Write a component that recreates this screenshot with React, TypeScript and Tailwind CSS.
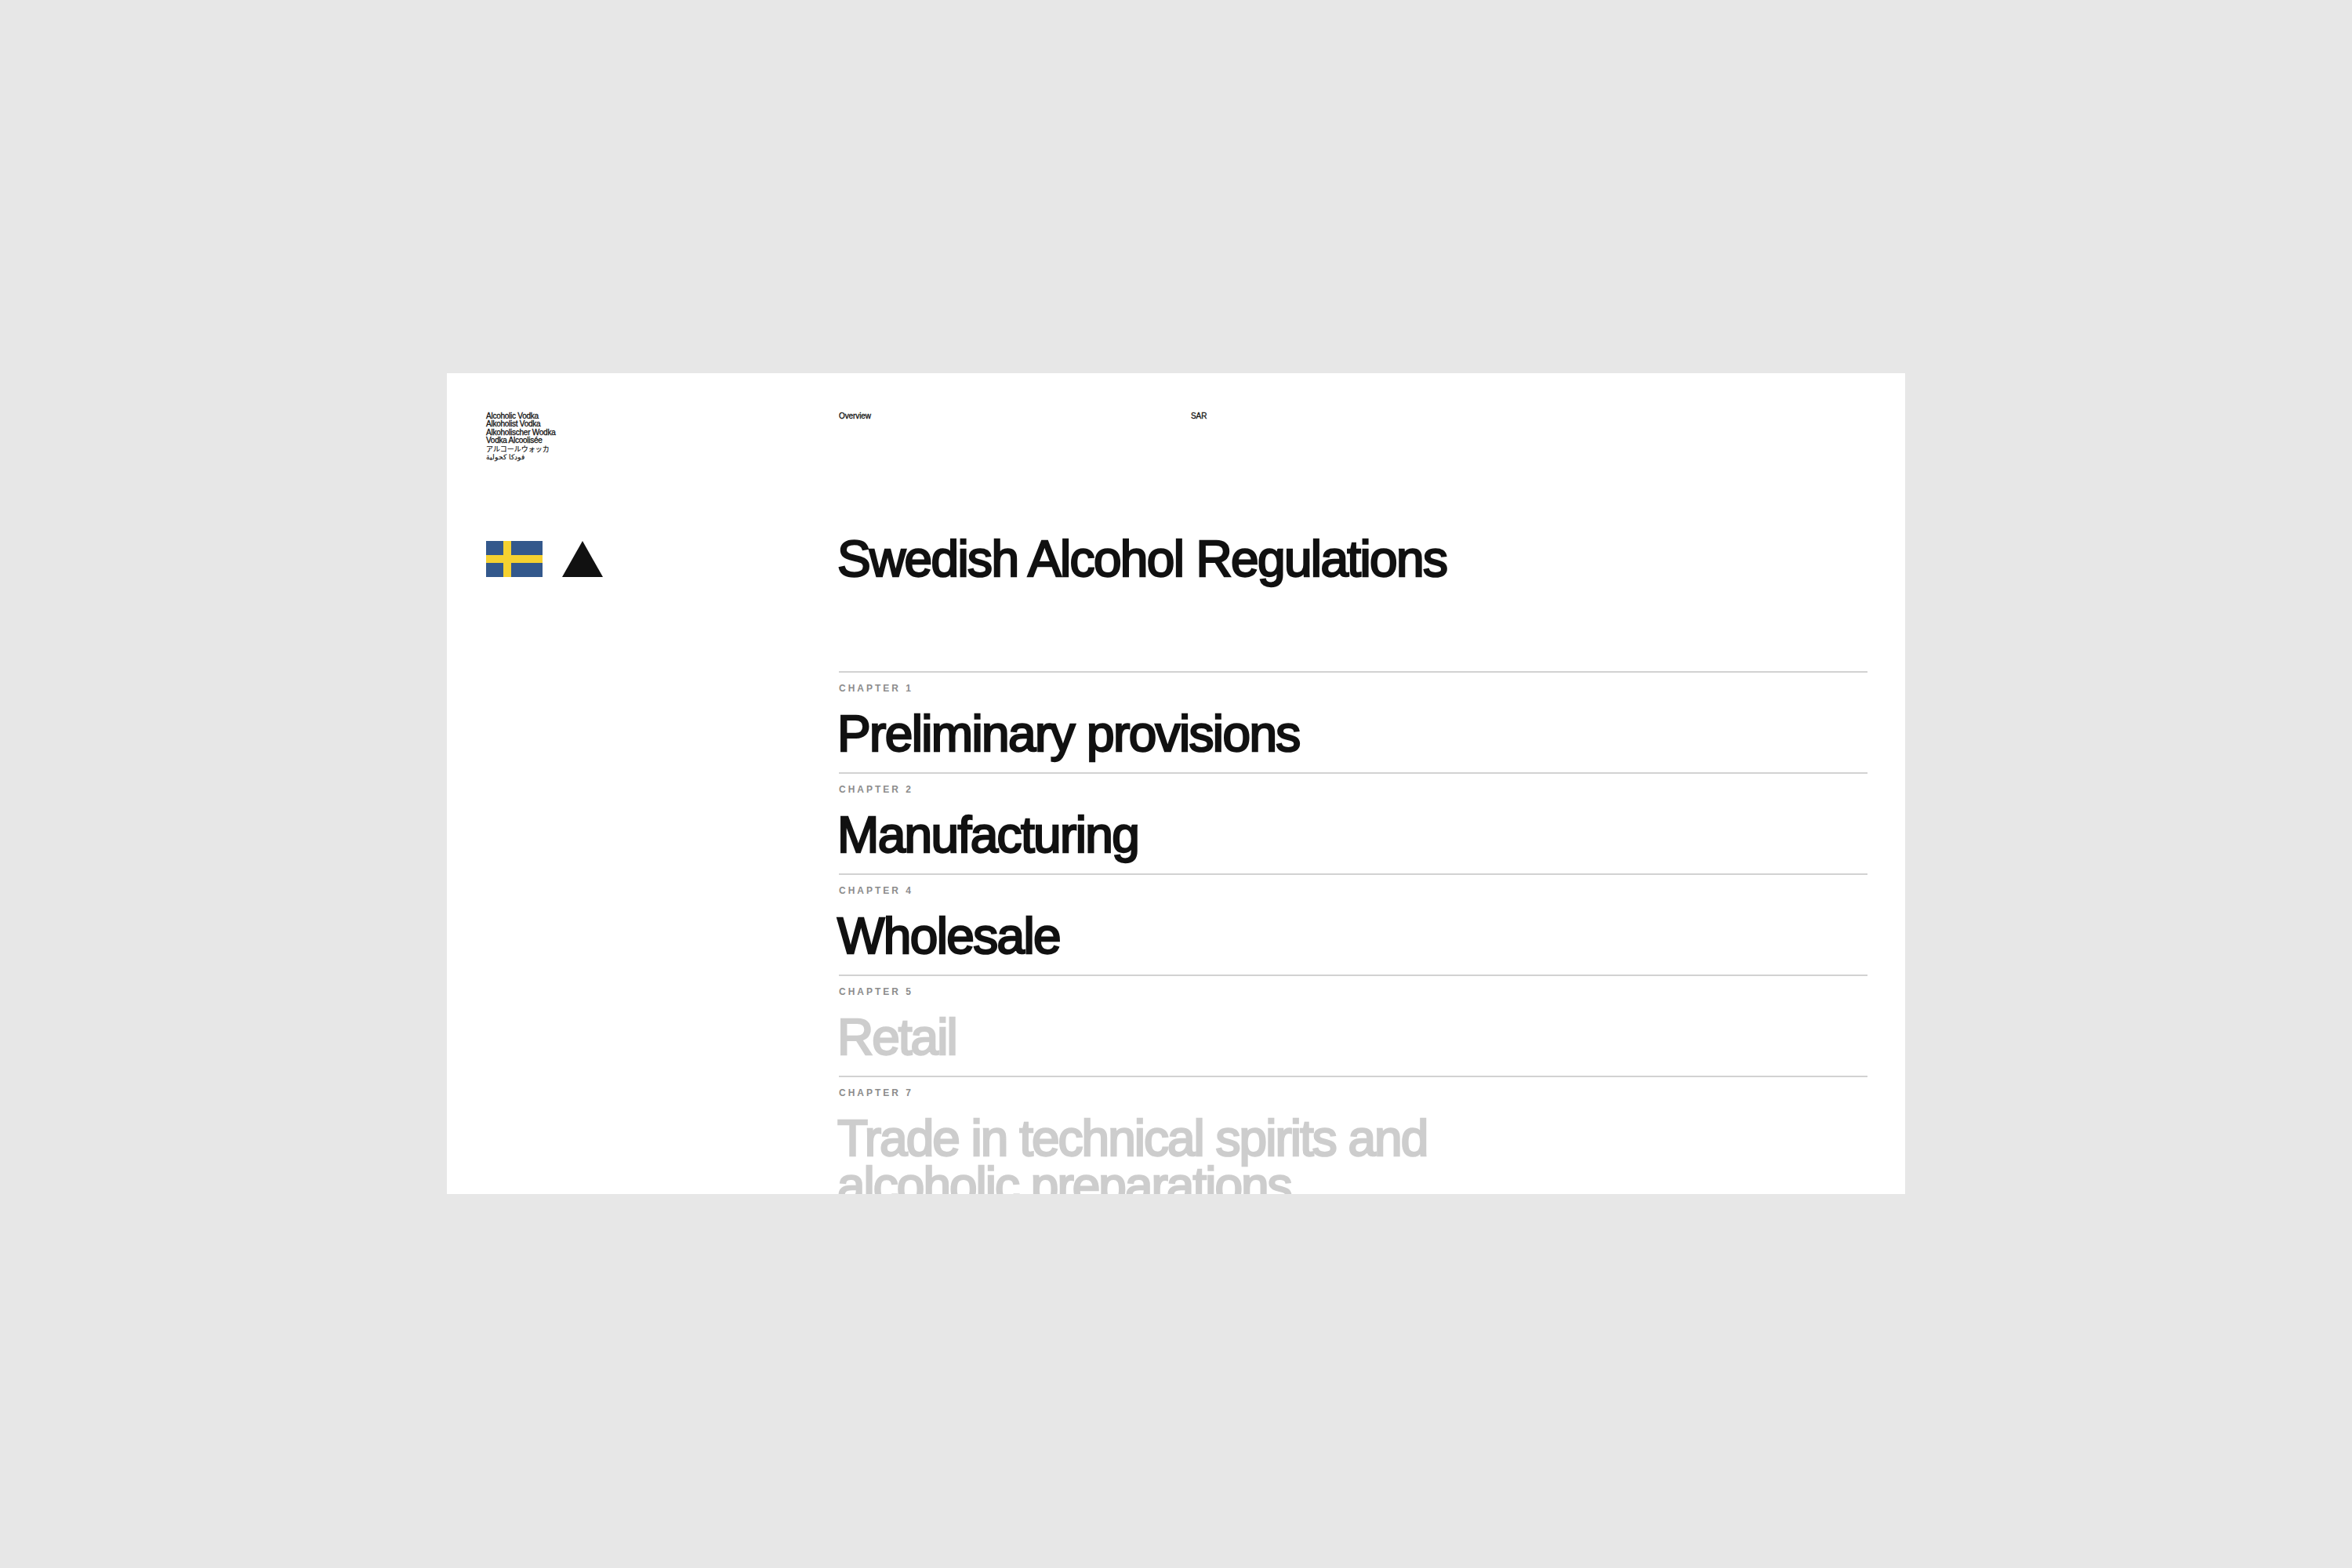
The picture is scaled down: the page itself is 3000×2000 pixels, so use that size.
const chapters = [
  { label: "CHAPTER 1", title: "Preliminary provisions", active: true },
  { label: "CHAPTER 2", title: "Manufacturing", active: true },
  { label: "CHAPTER 4", title: "Wholesale", active: true },
  { label: "CHAPTER 5", title: "Retail", active: false },
  { label: "CHAPTER 7", title: "Trade in technical spirits and alcoholic preparations", active: false },
];

const SwedishFlag = () => (
  <svg width="72" height="46" viewBox="0 0 72 46">
    <rect width="72" height="46" fill="#33588c" />
    <rect x="22" width="10" height="46" fill="#f5d130" />
    <rect y="18" width="72" height="10" fill="#f5d130" />
  </svg>
);

export default function App() {
  return (
    <div className="w-[3000px] h-[2000px] bg-[#e7e7e7] flex justify-center pt-[476px] font-['Liberation_Sans','Noto_Sans_CJK_JP',sans-serif]">
      <div className="w-[1860px] h-[1047px] bg-white overflow-hidden flex pl-[50px] pr-[48px] pt-[50px]">
        <div className="w-[450px] shrink-0 flex flex-col">
          <div className="text-[10px] leading-[10.4px] tracking-[-0.25px] text-[#111] [-webkit-text-stroke:0.3px_#111]">
            <div>Alcoholic Vodka</div>
            <div>Alkoholist Vodka</div>
            <div>Alkoholischer Wodka</div>
            <div>Vodka Alcoolisée</div>
            <div className="text-[9px] tracking-normal [-webkit-text-stroke:0.15px_#111]">アルコールウォッカ</div>
            <div className="text-[9px] tracking-normal [-webkit-text-stroke:0.15px_#111]" dir="rtl" style={{ textAlign: "left" }}>فودكا كحولية</div>
          </div>
          <div className="flex items-start gap-[25px] mt-[102px]">
            <SwedishFlag />
            <svg width="52" height="46" viewBox="0 0 52 46">
              <polygon points="26,0 52,46 0,46" fill="#111" />
            </svg>
          </div>
        </div>
        <div className="flex-1 flex flex-col">
          <div className="flex text-[10px] leading-[10px] tracking-[-0.1px] text-[#111] [-webkit-text-stroke:0.3px_#111]">
            <div className="w-[449px]">Overview</div>
            <div>SAR</div>
          </div>
          <h1 className="text-[64px] leading-[72px] tracking-[-1.65px] text-[#111] [-webkit-text-stroke:2.4px_#111] mt-[141px] -ml-[2px]">
            Swedish Alcohol Regulations
          </h1>
          <div className="mt-[107px]">
            {chapters.map((c) => (
              <div key={c.label} className="border-t-2 border-[#d2d2d2] h-[129px] pt-[13px]">
                <div className="text-[12px] leading-[14px] font-bold tracking-[3px] text-[#8c8c8c]">{c.label}</div>
                <div
                  className={`text-[64px] leading-[60px] mt-[21px] -ml-[2px] max-w-[790px] ${
                    c.active
                      ? "tracking-[-1.65px] text-[#111] [-webkit-text-stroke:2.4px_#111]"
                      : "tracking-[-2px] text-[#cdcdcd] [-webkit-text-stroke:2.4px_#cdcdcd]"
                  }`}
                >
                  {c.title}
                </div>
              </div>
            ))}
          </div>
        </div>
      </div>
    </div>
  );
}
